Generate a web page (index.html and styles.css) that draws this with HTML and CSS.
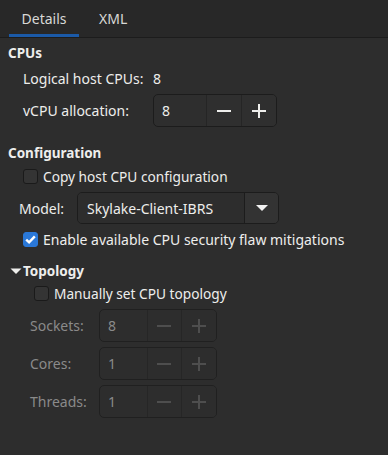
FILE: index.html
```html
<!DOCTYPE html>
<html>
<head>
<meta charset="utf-8">
<link rel="stylesheet" href="styles.css">
</head>
<body>
<div class="tabs">
  <div class="tab active">Details</div>
  <div class="tab">XML</div>
</div>
<div class="content">
  <div class="header h-cpus">CPUs</div>
  <div class="row r-logical">
    <span class="lbl-w">Logical host CPUs:</span><span>8</span>
  </div>
  <div class="row r-vcpu">
    <span class="lbl-w">vCPU allocation:</span>
    <div class="spin">
      <div class="spin-entry">8</div>
      <div class="spin-btn"><svg width="16" height="16" viewBox="0 0 16 16"><rect x="1" y="7" width="14" height="2" fill="currentColor"/></svg></div>
      <div class="spin-btn"><svg width="16" height="16" viewBox="0 0 16 16"><rect x="1" y="7" width="14" height="2" fill="currentColor"/><rect x="7" y="1" width="2" height="14" fill="currentColor"/></svg></div>
    </div>
  </div>

  <div class="header h-config">Configuration</div>
  <div class="row r-copy">
    <span class="check"></span><span>Copy host CPU configuration</span>
  </div>
  <div class="row r-model">
    <span class="lbl-model">Model:</span>
    <div class="combo">
      <div class="combo-entry">Skylake-Client-IBRS</div>
      <div class="combo-btn"><svg width="14" height="8" viewBox="0 0 14 8"><path d="M1 1 H13 L7 7 Z" fill="currentColor"/></svg></div>
    </div>
  </div>
  <div class="row r-enable">
    <span class="check checked"><svg width="15" height="15" viewBox="0 0 15 15"><path d="M3.2 7.6 L6.1 10.4 L11.8 4.4" fill="none" stroke="#fff" stroke-width="2.4"/></svg></span><span>Enable available CPU security flaw mitigations</span>
  </div>

  <div class="header h-topo"><svg class="expander" width="12" height="8" viewBox="0 0 12 8"><path d="M0.5 1.5 H11.5 L6 7 Z" fill="currentColor"/></svg>Topology</div>
  <div class="row r-manual">
    <span class="check"></span><span>Manually set CPU topology</span>
  </div>
  <div class="topo">
    <div class="row r-topo">
      <span class="lbl-topo">Sockets:</span>
      <div class="spin spin-sm disabled">
        <div class="spin-entry">8</div>
        <div class="spin-btn"><svg width="16" height="16" viewBox="0 0 16 16"><rect x="1" y="7" width="14" height="2" fill="currentColor"/></svg></div>
        <div class="spin-btn"><svg width="16" height="16" viewBox="0 0 16 16"><rect x="1" y="7" width="14" height="2" fill="currentColor"/><rect x="7" y="1" width="2" height="14" fill="currentColor"/></svg></div>
      </div>
    </div>
    <div class="row r-topo">
      <span class="lbl-topo">Cores:</span>
      <div class="spin spin-sm disabled">
        <div class="spin-entry">1</div>
        <div class="spin-btn"><svg width="16" height="16" viewBox="0 0 16 16"><rect x="1" y="7" width="14" height="2" fill="currentColor"/></svg></div>
        <div class="spin-btn"><svg width="16" height="16" viewBox="0 0 16 16"><rect x="1" y="7" width="14" height="2" fill="currentColor"/><rect x="7" y="1" width="2" height="14" fill="currentColor"/></svg></div>
      </div>
    </div>
    <div class="row r-topo">
      <span class="lbl-topo">Threads:</span>
      <div class="spin spin-sm disabled">
        <div class="spin-entry">1</div>
        <div class="spin-btn"><svg width="16" height="16" viewBox="0 0 16 16"><rect x="1" y="7" width="14" height="2" fill="currentColor"/></svg></div>
        <div class="spin-btn"><svg width="16" height="16" viewBox="0 0 16 16"><rect x="1" y="7" width="14" height="2" fill="currentColor"/><rect x="7" y="1" width="2" height="14" fill="currentColor"/></svg></div>
      </div>
    </div>
  </div>
</div>
</body>
</html>
```
FILE: styles.css
```css
html, body {
  margin: 0;
  padding: 0;
  background: #2d2d2d;
  color: #eeeeec;
  font-family: "Noto Sans", "DejaVu Sans", sans-serif;
  font-size: 14px;
  width: 388px;
  height: 455px;
  overflow: hidden;
}

.tabs {
  height: 37px;
  background: #282828;
  border-bottom: 1px solid #1c1c1c;
  display: flex;
  padding-left: 9px;
  box-sizing: content-box;
}

.tab {
  height: 37px;
  box-sizing: border-box;
  padding: 0 13px;
  display: flex;
  align-items: center;
  color: #d8d8d6;
  margin-right: 7px;
}

.tab.active {
  border-bottom: 3px solid #1b5aa8;
  padding-top: 3px;
  width: 70px;
  justify-content: center;
}

.content {
  display: flex;
  flex-direction: column;
}

.header {
  font-weight: bold;
  font-size: 13.5px;
  height: 22px;
  display: flex;
  align-items: center;
  padding-left: 8px;
}

.h-cpus { margin-top: 4px; }
.h-config { margin-top: 15px; }
.h-topo { margin-top: 10px; padding-left: 10px; }

.expander {
  margin-right: 1px;
  color: #eeeeec;
}

.row {
  display: flex;
  align-items: center;
  height: 22px;
}

.r-logical { margin-top: 3px; padding-left: 23px; }
.r-vcpu { margin-top: 5px; padding-left: 23px; height: 33px; }
.lbl-w { width: 130px; }

.r-copy { margin-top: 1px; padding-left: 23px; }
.r-enable { margin-top: 4px; padding-left: 23px; }
.r-manual { padding-left: 34px; }
.r-copy span:last-child, .r-manual span:last-child { font-size: 13.7px; }

.r-model { margin-top: 5px; padding-left: 19px; height: 32px; }
.lbl-model { width: 58px; }

.check {
  width: 15px;
  height: 15px;
  box-sizing: border-box;
  border: 1px solid #1a1a1a;
  border-radius: 3px;
  background: #343434;
  margin-right: 5px;
  display: flex;
}

.check.checked {
  background: #2a78d8;
  border-color: #2a78d8;
}

.check.checked svg {
  margin: -1px;
}

.spin {
  display: flex;
  width: 124px;
  height: 33px;
  box-sizing: border-box;
  border: 1px solid #1c1c1c;
  border-radius: 5px;
  background: #2e2e2e;
  overflow: hidden;
}

.spin-entry {
  width: 53px;
  display: flex;
  align-items: center;
  padding-left: 8px;
  box-sizing: border-box;
}

.spin-btn {
  width: 34px;
  border-left: 1px solid #252525;
  display: flex;
  align-items: center;
  justify-content: center;
  color: #eeeeec;
  background: #2f2f2f;
}

.spin-btn:last-child {
  width: 35px;
}

.combo {
  display: flex;
  width: 202px;
  height: 32px;
  box-sizing: border-box;
  border: 1px solid #1c1c1c;
  border-radius: 5px;
  overflow: hidden;
}

.combo-entry {
  width: 166px;
  display: flex;
  align-items: center;
  padding-left: 9px;
  box-sizing: border-box;
  background: #2d2d2d;
}

.combo-btn {
  flex: 1;
  border-left: 1px solid #1c1c1c;
  background: #333333;
  display: flex;
  align-items: center;
  justify-content: center;
  color: #f2f2f2;
}

.topo {
  display: flex;
  flex-direction: column;
  gap: 5px;
  margin-top: 5px;
}

.r-topo {
  padding-left: 30px;
  height: 33px;
}

.lbl-topo {
  width: 69px;
  color: #8a8a8a;
}

.spin-sm {
  width: 118px;
}

.spin-sm .spin-entry {
  width: 48px;
}

.spin-sm .spin-btn {
  width: 35px;
}

.spin.disabled {
  color: #8a8a8a;
  background: #2d2d2d;
  border-color: #202020;
}

.spin.disabled .spin-btn {
  color: #4e4e4e;
  background: #2d2d2d;
  border-left-color: #262626;
}
```
